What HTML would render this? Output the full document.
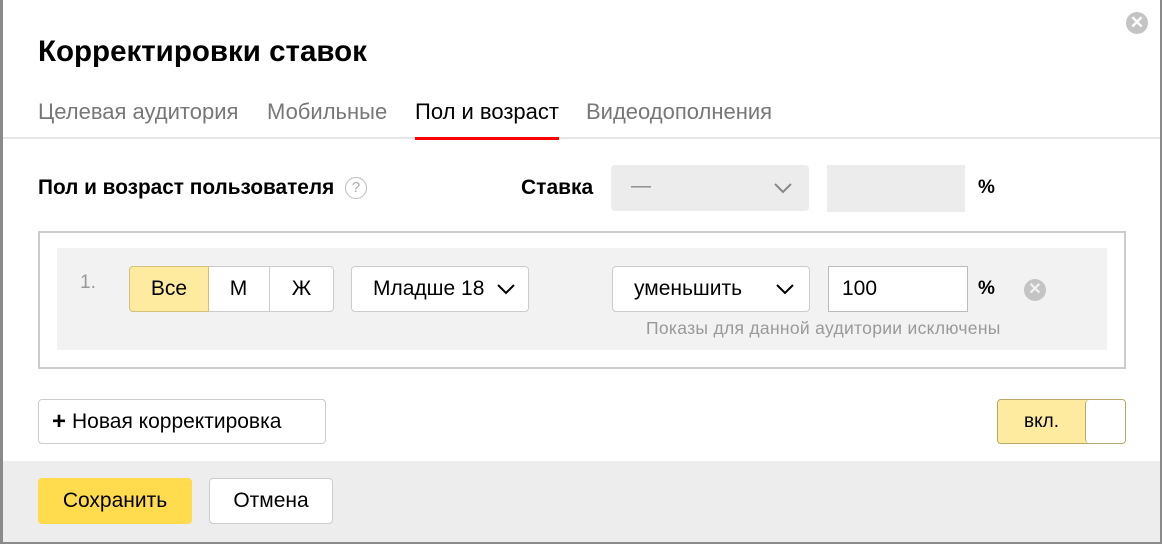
<!DOCTYPE html>
<html><head><meta charset="utf-8"><style>
*{box-sizing:border-box;margin:0;padding:0}
body{width:1162px;height:544px;overflow:hidden;background:#8a8a8a;font-family:"Liberation Sans",Arial,sans-serif;position:relative;color:#000}
.modal{position:absolute;left:3px;top:0;width:1157px;height:542px;background:#fff}
.a{position:absolute;white-space:nowrap}
.btn{position:absolute;border:1px solid #ccc;border-radius:4px;background:#fff;font-size:21px;display:flex;align-items:center;justify-content:center;white-space:nowrap}
</style></head><body>
<div class="modal">
<div class="a" style="left:35px;top:35px;font-size:29.5px;font-weight:bold">Корректировки ставок</div>
<div class="a" style="left:35px;top:99px;font-size:22px;color:#777">Целевая аудитория</div>
<div class="a" style="left:264px;top:99px;font-size:22px;color:#777">Мобильные</div>
<div class="a" style="left:412px;top:99px;font-size:22px;color:#000">Пол и возраст</div>
<div class="a" style="left:583px;top:99px;font-size:22px;color:#777">Видеодополнения</div>
<div class="a" style="left:0;top:137px;width:1157px;height:2px;background:#e6e6e6"></div>
<div class="a" style="left:412px;top:137px;width:144px;height:3px;background:#f00"></div>
<div class="a" style="right:12px;top:12px;width:22px;height:22px;border-radius:50%;background:#c4c4c4;color:#fff;font-size:17px;font-weight:bold;text-align:center;line-height:22px">✕</div>

<div class="a" style="left:35px;top:176px;font-size:20.8px;font-weight:bold">Пол и возраст пользователя</div>
<div class="a" style="left:342px;top:177px;width:22px;height:22px;border:1.5px solid #bbb;border-radius:50%;color:#aaa;font-size:15px;text-align:center;line-height:19px">?</div>
<div class="a" style="left:518px;top:176px;font-size:21px;font-weight:bold">Ставка</div>
<div class="a" style="left:608px;top:165px;width:198px;height:46px;background:#ececec;border-radius:4px;color:#888;font-size:20px;padding:10px 20px">—</div>
<svg class="a" style="left:770px;top:182px" width="20" height="12"><path d="M2 2 L10 10 L18 2" stroke="#888" stroke-width="2" fill="none"/></svg>
<div class="a" style="left:824px;top:165px;width:138px;height:47px;background:#ececec"></div>
<div class="a" style="left:975px;top:177px;font-size:19px;font-weight:bold">%</div>

<div class="a" style="left:35px;top:231px;width:1088px;height:138px;border:2px solid #ccc"></div>
<div class="a" style="left:54px;top:248px;width:1050px;height:102px;background:#f2f2f2"></div>
<div class="a" style="left:77px;top:272px;font-size:19px;color:#999">1.</div>
<div class="a" style="left:126px;top:266px;width:205px;height:46px;border:1px solid #ccc;border-radius:4px;background:#fff"></div>
<div class="btn" style="left:126px;top:266px;width:80px;height:46px;background:#ffeba0;border-color:#d4c07a;border-radius:4px 0 0 4px">Все</div>
<div class="a" style="left:205px;top:266px;width:62px;height:46px;display:flex;align-items:center;justify-content:center;font-size:21px;border-right:1px solid #ccc">М</div>
<div class="a" style="left:267px;top:266px;width:63px;height:46px;display:flex;align-items:center;justify-content:center;font-size:21px">Ж</div>
<div class="btn" style="left:348px;top:266px;width:178px;height:46px;justify-content:flex-start;padding-left:21px">Младше 18</div>
<svg class="a" style="left:493px;top:283px" width="20" height="12"><path d="M2 2 L10 10 L18 2" stroke="#000" stroke-width="2" fill="none"/></svg>
<div class="btn" style="left:609px;top:266px;width:198px;height:46px;justify-content:flex-start;padding-left:21px">уменьшить</div>
<svg class="a" style="left:772px;top:283px" width="20" height="12"><path d="M2 2 L10 10 L18 2" stroke="#000" stroke-width="2" fill="none"/></svg>
<div class="a" style="left:825px;top:266px;width:140px;height:46px;border:1px solid #bbb;background:#fff;font-size:21px;padding:10px 13px">100</div>
<div class="a" style="left:975px;top:278px;font-size:19px;font-weight:bold">%</div>
<div class="a" style="left:1021px;top:279px;width:22px;height:22px;border-radius:50%;background:#c4c4c4;color:#f2f2f2;font-size:16px;font-weight:bold;text-align:center;line-height:22px">✕</div>
<div class="a" style="left:643px;top:318px;font-size:17.5px;color:#999;letter-spacing:0.3px">Показы для данной аудитории исключены</div>

<div class="btn" style="left:35px;top:399px;width:288px;height:45px;justify-content:flex-start;padding-left:13px"><b style="font-size:24px;margin-right:6px;line-height:20px">+</b>Новая корректировка</div>
<div class="a" style="left:994px;top:399px;width:129px;height:45px;border:1px solid #b8a96a;border-radius:4px;background:#ffeba0;overflow:hidden">
<div class="a" style="left:0;top:0;width:87px;height:43px;display:flex;align-items:center;justify-content:center;font-size:19px">вкл.</div>
<div class="a" style="left:87px;top:0;width:41px;height:43px;background:#fff;border-left:1px solid #b8a96a;border-radius:4px"></div>
</div>

<div class="a" style="left:0;top:461px;width:1157px;height:81px;background:#ededed"></div>
<div class="btn" style="left:35px;top:478px;width:154px;height:46px;background:#ffdb4d;border-color:#ffdb4d">Сохранить</div>
<div class="btn" style="left:206px;top:478px;width:124px;height:46px">Отмена</div>
</div>
</body></html>
